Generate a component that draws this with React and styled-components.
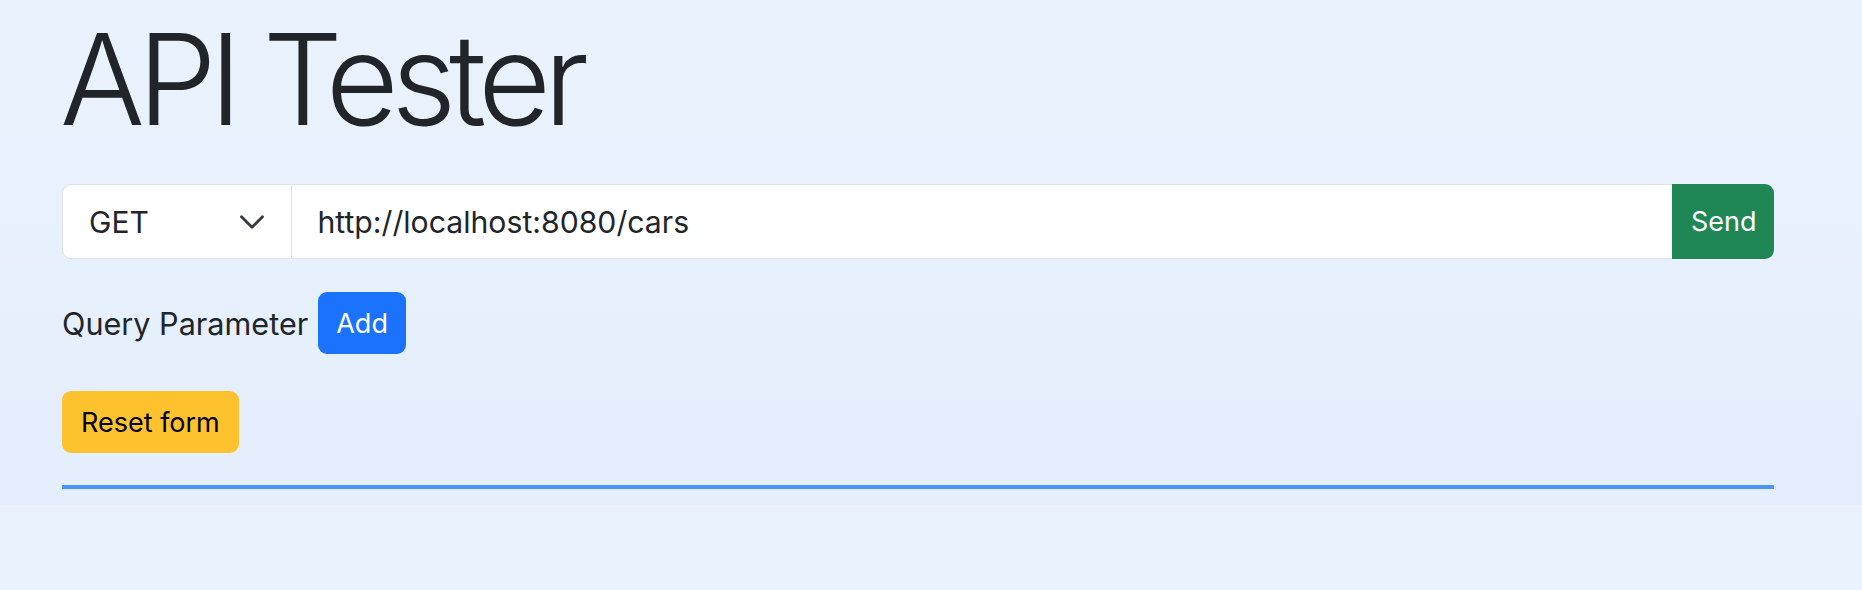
import React, { useState } from 'react';
import styled, { createGlobalStyle } from 'styled-components';

const GlobalStyle = createGlobalStyle`
  body {
    margin: 0;
    background: #e9f1fd;
    font-family: Inter, "Liberation Sans", sans-serif;
    color: #212529;
  }
  * { box-sizing: border-box; }
`;

const Page = styled.main`
  background: linear-gradient(180deg, #eaf2fd 0%, #e4eefc 100%);
  padding: 4px 88px 16px 62px;
`;

const Title = styled.h1`
  margin: 0 0 29px -2px;
  font-size: 126px;
  line-height: 151px;
  font-weight: 300;
  letter-spacing: -7.4px;
`;

const InputGroup = styled.div`
  display: flex;
  height: 75px;
`;

const MethodSelect = styled.div`
  display: flex;
  align-items: center;
  justify-content: space-between;
  width: 229.5px;
  padding: 0 25px 0 26px;
  background: #fff;
  border: 1.5px solid #dee2e6;
  border-radius: 9px 0 0 9px;
  font-size: 30px;
`;

const UrlInput = styled.input`
  flex: 1;
  min-width: 0;
  height: 100%;
  padding: 0 26px;
  border: 1.5px solid #dee2e6;
  border-left: none;
  border-right: none;
  background: #fff;
  font-family: inherit;
  font-size: 30.2px;
  color: #212529;
  outline: none;
`;

const Button = styled.button`
  height: 62px;
  padding: 0 ${p => p.px || 19}px;
  border: none;
  border-radius: 9px;
  background: ${p => p.bg};
  color: ${p => p.fg || '#fff'};
  font-family: inherit;
  font-size: 27px;
  cursor: pointer;
`;

const SendButton = styled(Button)`
  height: 100%;
  width: 102px;
  border-radius: 0 9px 9px 0;
`;

const QueryRow = styled.div`
  display: flex;
  align-items: center;
  gap: 10px;
  margin-top: 33px;
  font-size: 30.6px;
`;

const ResetRow = styled.div`
  margin-top: 37px;
`;

const Rule = styled.hr`
  margin: 32px 0 0;
  border: none;
  height: 4px;
  background: #4b94fa;
`;

function Chevron() {
  return (
    <svg width="28" height="28" viewBox="0 0 16 16" fill="none">
      <path d="m2 5 6 6 6-6" stroke="#343a40" strokeWidth="1.6" strokeLinecap="round" strokeLinejoin="round" />
    </svg>
  );
}

export default function App() {
  const [url, setUrl] = useState('http://localhost:8080/cars');

  return (
    <>
      <GlobalStyle />
      <Page>
        <Title>API Tester</Title>
        <InputGroup>
          <MethodSelect>
            <span>GET</span>
            <Chevron />
          </MethodSelect>
          <UrlInput value={url} onChange={e => setUrl(e.target.value)} />
          <SendButton bg="#1f8755">Send</SendButton>
        </InputGroup>
        <QueryRow>
          <span>Query Parameter</span>
          <Button bg="#1b72fd" px={18}>Add</Button>
        </QueryRow>
        <ResetRow>
          <Button bg="#fec22f" fg="#000">Reset form</Button>
        </ResetRow>
        <Rule />
      </Page>
    </>
  );
}
